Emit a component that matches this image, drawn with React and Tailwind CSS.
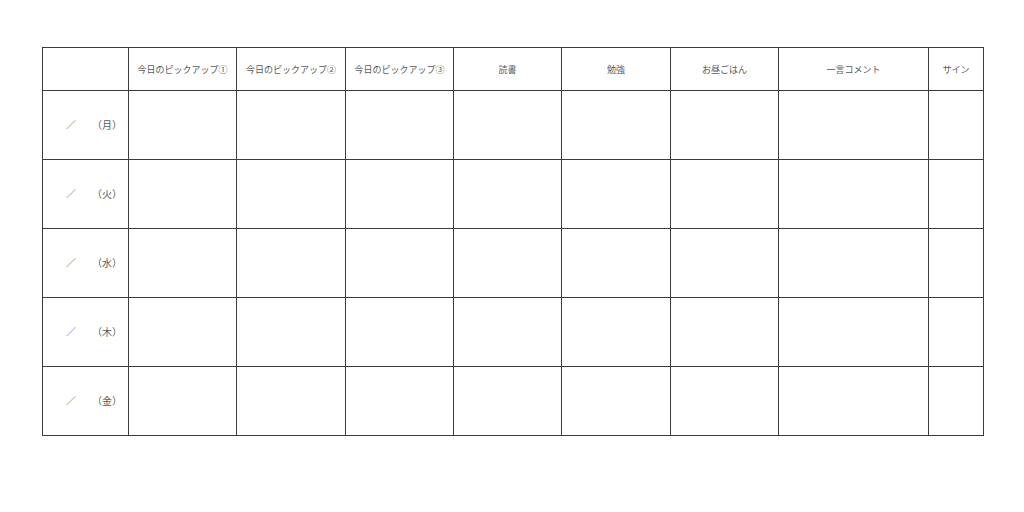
import React from "react";

const headers = [
  "",
  "今日のピックアップ①",
  "今日のピックアップ②",
  "今日のピックアップ③",
  "読書",
  "勉強",
  "お昼ごはん",
  "一言コメント",
  "サイン",
];

const days = ["月", "火", "水", "木", "金"];

export default function App() {
  return (
    <div
      className="w-[1024px] h-[512px] bg-white pt-[47px] pl-[42px]"
      style={{ fontFamily: '"Noto Sans CJK JP", "Noto Sans", sans-serif' }}
    >
      <div className="grid grid-cols-[86px_108px_109px_108px_108px_109px_108px_150px_55px] grid-rows-[43px_69px_69px_69px_69px_69px] w-[942px] border-l border-t border-[#3c3c3c] text-[#5a5a5a]">
        {headers.map((h, i) => (
          <div
            key={"h" + i}
            className="border-r border-b border-[#3c3c3c] flex items-center justify-center text-[9px] leading-none"
          >
            {h}
          </div>
        ))}
        {days.map((d) => (
          <React.Fragment key={d}>
            <div className="border-r border-b border-[#3c3c3c] flex items-center pl-[23px] pr-[6px] text-[10px] leading-none">
              <span>／</span>
              <span className="ml-auto">（{d}）</span>
            </div>
            {Array.from({ length: 8 }).map((_, j) => (
              <div key={d + j} className="border-r border-b border-[#3c3c3c]" />
            ))}
          </React.Fragment>
        ))}
      </div>
    </div>
  );
}
